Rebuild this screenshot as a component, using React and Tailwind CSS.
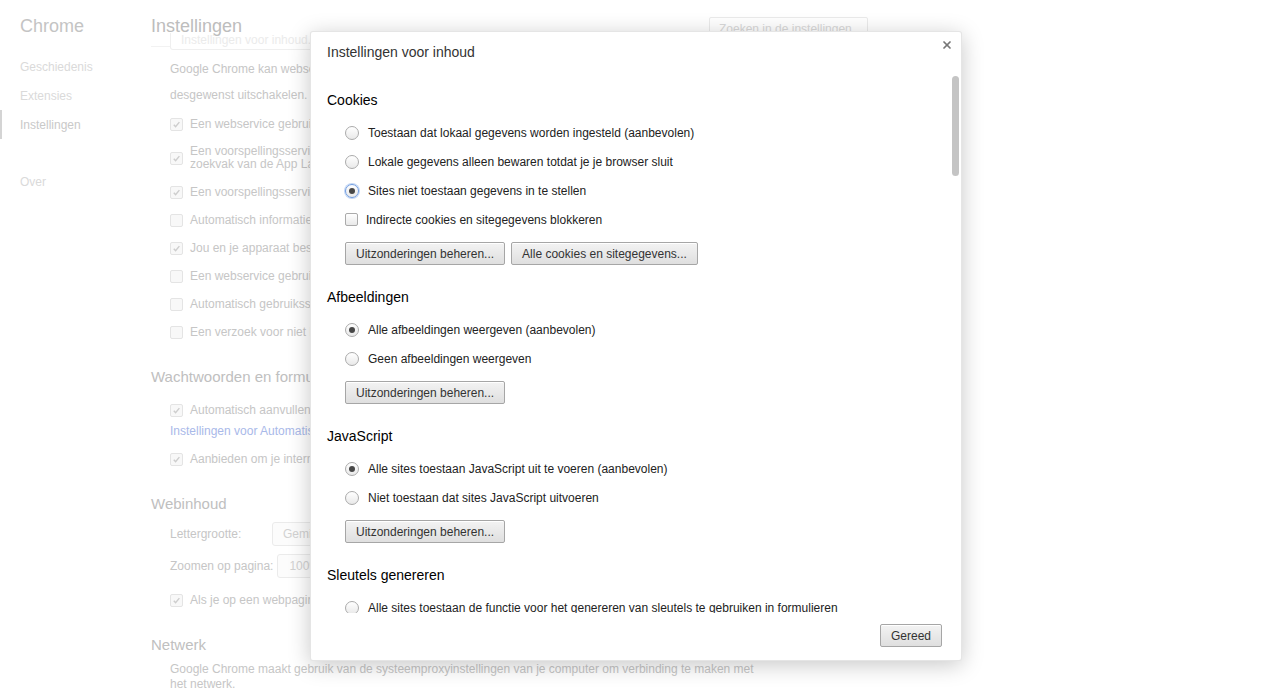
import { X } from "lucide-react";

const faint = "text-[#c6c6c6]";

function FaintCheck({ checked }) {
  return (
    <span className="w-[13px] h-[13px] shrink-0 rounded-[2px] border border-[#e4e4e4] bg-[#f8f8f8] flex items-center justify-center">
      {checked && (
        <svg width="9" height="9" viewBox="0 0 10 10">
          <path d="M2 5.3l2 2.2L8.2 2.4" fill="none" stroke="#cdcdcd" strokeWidth="1.6" />
        </svg>
      )}
    </span>
  );
}

function FaintRow({ checked, children, tall }) {
  return (
    <div className={`flex items-center gap-[7px] ${tall ? "h-[40px]" : "h-[28px]"}`}>
      <FaintCheck checked={checked} />
      <span className={`${faint} text-[12px] leading-[13px] whitespace-nowrap`}>{children}</span>
    </div>
  );
}

function Radio({ checked, focus }) {
  return (
    <span
      className={`w-[14px] h-[14px] shrink-0 rounded-full border bg-linear-to-b from-white to-[#e9e9e9] flex items-center justify-center ${
        focus ? "border-[#6f9be0] shadow-[0_0_0_1px_#c2d6f5]" : "border-[#ababab]"
      }`}
    >
      {checked && <span className="w-[6px] h-[6px] rounded-full bg-[#474747]" />}
    </span>
  );
}

function Option({ checked, focus, children }) {
  return (
    <div className="flex items-center gap-[9px] h-[29px] pl-[18px]">
      <Radio checked={checked} focus={focus} />
      <span className="text-[12px] leading-[14px] text-[#222] whitespace-nowrap">{children}</span>
    </div>
  );
}

function Btn({ children }) {
  return (
    <button className="h-[23px] px-[10px] rounded-[2px] border border-[#a6a6a6] bg-linear-to-b from-[#f3f3f3] to-[#dfdfdf] text-[12px] text-[#333] leading-none whitespace-nowrap shadow-[inset_0_1px_0_#fff]">
      {children}
    </button>
  );
}

function Section({ title, first, children }) {
  return (
    <div className={first ? "" : "mt-[23px]"}>
      <h3 className="h-[18px] leading-[18px] text-[14px] text-black">{title}</h3>
      <div className="mt-[9px]">{children}</div>
    </div>
  );
}

export default function App() {
  return (
    <div className="relative w-[1271px] h-[692px] overflow-hidden bg-white font-['Liberation_Sans',Arial,sans-serif]">
      <div className="flex">
        {/* left nav */}
        <nav className="w-[151px] shrink-0 pt-[15px]">
          <div className="pl-[20px] text-[18px] leading-[22px] text-[#c4c4c4]">Chrome</div>
          <div className="mt-[15px] text-[12px]">
            <div className="h-[29px] flex items-center pl-[20px] text-[#dadada]">Geschiedenis</div>
            <div className="h-[29px] flex items-center pl-[20px] text-[#dadada]">Extensies</div>
            <div className="h-[29px] flex items-center pl-[18px] border-l-2 border-[#d4d4d4] text-[#c9c9c9]">Instellingen</div>
            <div className="h-[29px] mt-[28px] flex items-center pl-[20px] text-[#dadada]">Over</div>
          </div>
        </nav>

        {/* settings page behind the overlay */}
        <main className="w-[720px]">
          <div className="h-[33px] flex justify-between w-[717px]">
            <h1 className="pt-[15px] text-[18px] leading-[22px] text-[#bdbdbd]">Instellingen</h1>
            <div className="mt-[17px] w-[159px] h-[24px] border border-[#ebebeb] rounded-[2px] pl-[9px] text-[12px] leading-[22px] text-[#d9d9d9]">
              Zoeken in de instellingen
            </div>
          </div>
          <div className="h-[17px] flex">
            <div className="w-[19px] border-b border-[#f2f2f2] h-[14px]" />
            <div className="w-[160px] h-[17px] border-x border-b border-[#efefef] rounded-b-[3px] pl-[10px] text-[12px] leading-[14px] text-[#ebebeb] overflow-hidden">
              Instellingen voor inhoud...
            </div>
          </div>

          <div className="pl-[19px]">
            <p className={`mt-[6px] ${faint} text-[12px] leading-[26px] whitespace-nowrap`}>
              Google Chrome kan webservices gebruiken om je browsefunctionaliteit te verbeteren. Je kunt deze services
              <br />
              desgewenst uitschakelen. Meer informatie
            </p>
            <div className="mt-[2px]">
              <FaintRow checked>Een webservice gebruiken om navigatiefouten te helpen oplossen</FaintRow>
              <FaintRow checked tall>
                Een voorspellingsservice gebruiken om zoekopdrachten en URL's te helpen voltooien die in de adresbalk of het
                <br />
                zoekvak van de App Launcher worden getypt
              </FaintRow>
              <FaintRow checked>Een voorspellingsservice gebruiken om pagina's sneller te laden</FaintRow>
              <FaintRow>Automatisch informatie over mogelijke beveiligingsincidenten naar Google verzenden</FaintRow>
              <FaintRow checked>Jou en je apparaat beschermen tegen gevaarlijke sites</FaintRow>
              <FaintRow>Een webservice gebruiken om spelfouten op te lossen</FaintRow>
              <FaintRow>Automatisch gebruiksstatistieken en crashrapporten naar Google verzenden</FaintRow>
              <FaintRow>Een verzoek voor niet bijhouden met je browseverkeer verzenden</FaintRow>
            </div>
          </div>

          <h2 className="mt-[22px] text-[15px] leading-[18px] text-[#c0c0c0]">Wachtwoorden en formulieren</h2>
          <div className="pl-[19px]">
            <div className="mt-[10px]">
              <FaintRow checked>Automatisch aanvullen inschakelen om webformulieren met één klik in te vullen.</FaintRow>
            </div>
            <div className="h-[14px] leading-[14px] text-[12px] text-[#a9b9e9] whitespace-nowrap">
              Instellingen voor Automatisch aanvullen beheren
            </div>
            <div className="mt-[7px]">
              <FaintRow checked>Aanbieden om je internetwachtwoorden op te slaan. Wachtwoorden beheren</FaintRow>
            </div>
          </div>

          <h2 className="mt-[22px] text-[15px] leading-[18px] text-[#c0c0c0]">Webinhoud</h2>
          <div className="pl-[19px] text-[12px]">
            <div className="mt-[5px] h-[32px] flex items-center">
              <span className={`w-[102px] ${faint}`}>Lettergrootte:</span>
              <div className="h-[24px] w-[140px] border border-[#ebebeb] bg-[#fcfcfc] rounded-[3px] pl-[10px] leading-[22px] text-[#d2d2d2]">
                Gemiddeld
              </div>
            </div>
            <div className="h-[32px] flex items-center">
              <span className={faint}>Zoomen op pagina:</span>
              <div className="ml-[4px] h-[24px] w-[80px] border border-[#ebebeb] bg-[#fcfcfc] rounded-[3px] pl-[11px] leading-[22px] text-[#d2d2d2]">
                100%
              </div>
            </div>
            <div className="mt-[4px]">
              <FaintRow checked>Als je op een webpagina op Tab drukt, worden links en formulieritems gemarkeerd</FaintRow>
            </div>
          </div>

          <h2 className="mt-[22px] text-[15px] leading-[18px] text-[#c0c0c0]">Netwerk</h2>
          <p className={`mt-[8px] pl-[19px] ${faint} text-[12px] leading-[15px] whitespace-nowrap`}>
            Google Chrome maakt gebruik van de systeemproxyinstellingen van je computer om verbinding te maken met
            <br />
            het netwerk.
          </p>
        </main>
      </div>

      {/* content settings dialog */}
      <div className="absolute left-[310px] top-[31px] w-[652px] h-[630px] bg-white rounded-[3px] border border-black/10 shadow-[0_4px_22px_rgba(0,0,0,0.22)] flex flex-col">
        <div className="h-[44px] shrink-0 flex justify-between">
          <h2 className="pt-[12px] pl-[16px] text-[14px] leading-[16px] text-[#333]">Instellingen voor inhoud</h2>
          <X className="mt-[7px] mr-[8px] w-[12px] h-[12px] text-[#777]" strokeWidth={3.5} />
        </div>

        <div className="relative h-[537px] shrink-0 overflow-hidden pl-[16px] pt-[15px]">
          <Section title="Cookies" first>
            <Option>Toestaan dat lokaal gegevens worden ingesteld (aanbevolen)</Option>
            <Option>Lokale gegevens alleen bewaren totdat je je browser sluit</Option>
            <Option checked focus>Sites niet toestaan gegevens in te stellen</Option>
            <div className="flex items-center gap-[8px] h-[29px] pl-[18px]">
              <span className="w-[13px] h-[13px] rounded-[2px] border border-[#ababab] bg-linear-to-b from-white to-[#e9e9e9]" />
              <span className="text-[12px] leading-[14px] text-[#222]">Indirecte cookies en sitegegevens blokkeren</span>
            </div>
            <div className="mt-[8px] pl-[18px] flex gap-[6px]">
              <Btn>Uitzonderingen beheren...</Btn>
              <Btn>Alle cookies en sitegegevens...</Btn>
            </div>
          </Section>

          <Section title="Afbeeldingen">
            <Option checked>Alle afbeeldingen weergeven (aanbevolen)</Option>
            <Option>Geen afbeeldingen weergeven</Option>
            <div className="mt-[8px] pl-[18px] flex">
              <Btn>Uitzonderingen beheren...</Btn>
            </div>
          </Section>

          <Section title="JavaScript">
            <Option checked>Alle sites toestaan JavaScript uit te voeren (aanbevolen)</Option>
            <Option>Niet toestaan dat sites JavaScript uitvoeren</Option>
            <div className="mt-[8px] pl-[18px] flex">
              <Btn>Uitzonderingen beheren...</Btn>
            </div>
          </Section>

          <Section title="Sleutels genereren">
            <Option>Alle sites toestaan de functie voor het genereren van sleutels te gebruiken in formulieren</Option>
          </Section>

          <div className="absolute right-[2px] top-0 w-[7px] h-[100px] rounded-full bg-[#c4c4c4]" />
        </div>

        <div className="flex justify-end pt-[11px] pr-[19px]">
          <Btn>Gereed</Btn>
        </div>
      </div>
    </div>
  );
}
